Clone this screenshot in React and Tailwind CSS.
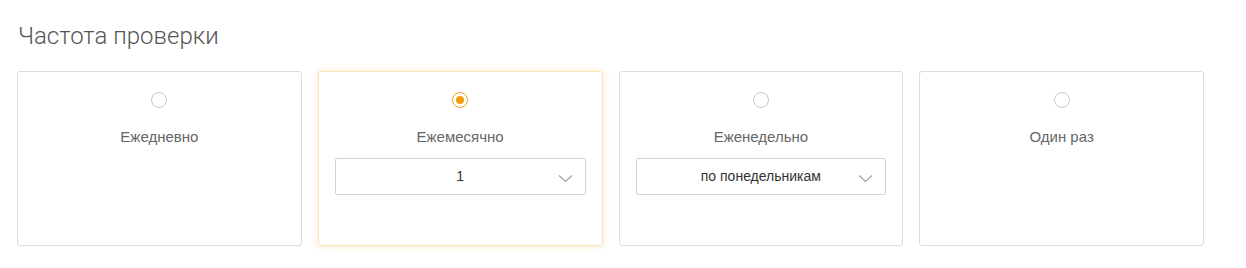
import React from "react";

function Radio({ checked }) {
  return checked ? (
    <span className="flex h-4 w-4 items-center justify-center rounded-full border border-[#f0a020] bg-white">
      <span className="h-[8px] w-[8px] rounded-full bg-[#f39c12]" />
    </span>
  ) : (
    <span className="block h-4 w-4 rounded-full border border-[#c8c8c8] bg-white" />
  );
}

function Select({ value }) {
  return (
    <div className="relative mt-[11px] flex h-[37px] items-center justify-center rounded-[2px] border border-[#d5d5d5] bg-white text-[14px] text-[#333]">
      <span>{value}</span>
      <svg
        className="absolute right-[12px] top-[15px]"
        width="15"
        height="9"
        viewBox="0 0 15 9"
        fill="none"
      >
        <path d="M1 1.5 L7.5 7.5 L14 1.5" stroke="#a0a0a0" strokeWidth="1.2" />
      </svg>
    </div>
  );
}

function Card({ label, checked, select }) {
  return (
    <div
      className={
        "flex h-[175px] flex-col rounded-[3px] border bg-white px-4 pt-[20px] " +
        (checked
          ? "border-[#fbe3b8] shadow-[0_0_6px_rgba(245,166,35,0.25)]"
          : "border-[#dcdcdc]")
      }
    >
      <div className="flex justify-center">
        <Radio checked={checked} />
      </div>
      <div className="mt-[19px] text-center text-[15px] leading-[20px] text-[#666]">
        {label}
      </div>
      {select && <Select value={select} />}
    </div>
  );
}

export default function App() {
  return (
    <div
      className="h-[268px] w-[1246px] bg-white pl-[17px] pt-[21px]"
      style={{ fontFamily: '"Liberation Sans", Arial, sans-serif' }}
    >
      <h2
        className="pl-[1px] text-[24px] font-light leading-[30px] text-[#555]"
        style={{ fontFamily: 'Roboto, "Liberation Sans", sans-serif' }}
      >
        Частота проверки
      </h2>
      <div className="mt-[20px] grid w-[1187px] grid-cols-4 gap-4">
        <Card label="Ежедневно" />
        <Card label="Ежемесячно" checked select="1" />
        <Card label="Еженедельно" select="по понедельникам" />
        <Card label="Один раз" />
      </div>
    </div>
  );
}
